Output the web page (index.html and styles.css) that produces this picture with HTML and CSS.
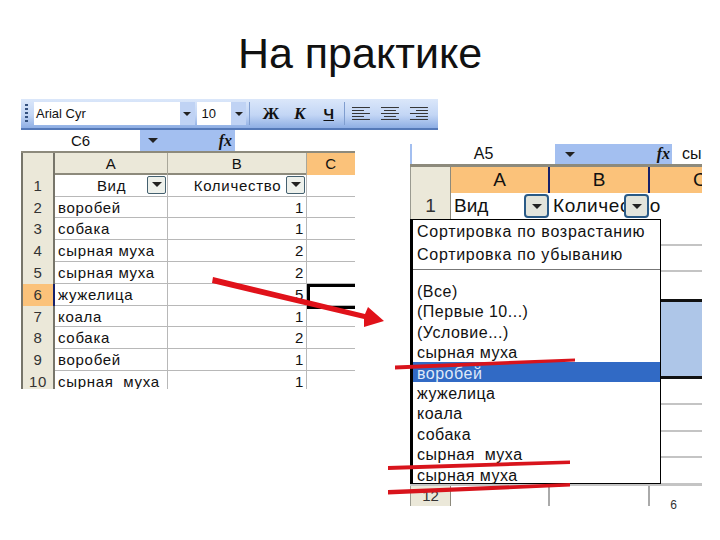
FILE: index.html
```html
<!DOCTYPE html>
<html lang="ru">
<head>
    <meta charset="UTF-8">
    <title>На практике</title>
    <link rel="stylesheet" href="styles.css">
</head>
<body>
    <div class="slide">
        <h1 class="title">На практике</h1>

        <div class="pictures">
            <div class="left-pic">
                <div class="toolbar">
                    <span class="grip"></span>
                    <span class="font-box">Arial Cyr</span>
                    <span class="tb-arrow"><i class="tri"></i></span>
                    <span class="size-box">10</span>
                    <span class="tb-arrow"><i class="tri"></i></span>
                    <span class="tb-sep"></span>
                    <b class="tb-btn">Ж</b>
                    <b class="tb-btn tb-italic">К</b>
                    <b class="tb-btn tb-under">Ч</b>
                    <span class="tb-sep"></span>
                    <svg class="align-icon" width="20" height="16" viewBox="0 0 20 16"><path d="M1 1.5H19M1 4.5H13M1 7.5H19M1 10.5H13M1 13.5H19" stroke="#333" fill="none"/></svg>
                    <svg class="align-icon" width="20" height="16" viewBox="0 0 20 16"><path d="M1 1.5H19M4 4.5H16M1 7.5H19M4 10.5H16M1 13.5H19" stroke="#333" fill="none"/></svg>
                    <svg class="align-icon" width="20" height="16" viewBox="0 0 20 16"><path d="M1 1.5H19M7 4.5H19M1 7.5H19M7 10.5H19M1 13.5H19" stroke="#333" fill="none"/></svg>
                </div>
                <div class="namebar">
                    <span class="name-cell">C6</span>
                    <span class="name-blue"><i class="tri"></i><em class="fx">fx</em></span>
                </div>
                <div class="sheet-a">
                    <div class="row-a row-head">
                        <span class="rh"></span><span class="ch">A</span><span class="ch">B</span><span class="ch ch-on">C</span>
                    </div>
                    <div class="row-a">
                        <span class="rh">1</span>
                        <span class="c hdr-cell">Вид<span class="filter"><i class="tri"></i></span></span>
                        <span class="c hdr-cell">Количество<span class="filter"><i class="tri"></i></span></span>
                        <span class="c"></span>
                    </div>
                    <div class="row-a"><span class="rh">2</span><span class="c">воробей</span><span class="c num">1</span><span class="c"></span></div>
                    <div class="row-a"><span class="rh">3</span><span class="c">собака</span><span class="c num">1</span><span class="c"></span></div>
                    <div class="row-a"><span class="rh">4</span><span class="c">сырная муха</span><span class="c num">2</span><span class="c"></span></div>
                    <div class="row-a"><span class="rh">5</span><span class="c">сырная муха</span><span class="c num">2</span><span class="c"></span></div>
                    <div class="row-a"><span class="rh rh-on">6</span><span class="c">жужелица</span><span class="c num">5</span><span class="c c-active"></span></div>
                    <div class="row-a"><span class="rh">7</span><span class="c">коала</span><span class="c num">1</span><span class="c"></span></div>
                    <div class="row-a"><span class="rh">8</span><span class="c">собака</span><span class="c num">2</span><span class="c"></span></div>
                    <div class="row-a"><span class="rh">9</span><span class="c">воробей</span><span class="c num">1</span><span class="c"></span></div>
                    <div class="row-a row-cut"><span class="rh">10</span><span class="c">сырная&nbsp; муха</span><span class="c num">1</span><span class="c"></span></div>
                </div>
            </div>

            <div class="right-pic">
                <div class="namebar-b">
                    <span class="name-cell-b">A5</span>
                    <span class="name-blue-b"><i class="tri"></i><em class="fx">fx</em></span>
                    <span class="name-text">сы</span>
                </div>
                <div class="sheet-b">
                    <div class="row-b row-head-b">
                        <span class="rh"></span><span class="ch-b">A</span><span class="ch-b">B</span><span class="ch-b ch-clip">C</span>
                    </div>
                    <div class="row-b row-one">
                        <span class="rh">1</span>
                        <span class="c-b">Вид<span class="filter filter-b"><i class="tri"></i></span></span>
                        <span class="c-b c-long">Количество<span class="filter filter-b"><i class="tri"></i></span></span>
                        <span class="c-b"></span>
                    </div>
                    <div class="under">
                        <div class="line"></div>
                        <div class="line"></div>
                        <div class="line line-last"></div>
                        <div class="sel-block"></div>
                        <div class="line"></div>
                        <div class="line"></div>
                        <div class="line"></div>
                        <div class="line"></div>
                        <div class="row-b row-end">
                            <span class="rh">12</span><span class="c-b"></span><span class="c-b"></span><span class="c-b"></span>
                        </div>
                    </div>
                    <div class="menu">
                        <div class="menu-sort">
                            <div>Сортировка по возрастанию</div>
                            <div>Сортировка по убыванию</div>
                        </div>
                        <div class="menu-list">
                            <div>(Все)</div>
                            <div>(Первые 10...)</div>
                            <div>(Условие...)</div>
                            <div>сырная муха</div>
                            <div class="picked">воробей</div>
                            <div>жужелица</div>
                            <div>коала</div>
                            <div>собака</div>
                            <div>сырная&nbsp; муха</div>
                            <div>сырная муха</div>
                        </div>
                    </div>
                </div>
                <div class="page-num">6</div>
            </div>
        </div>

        <svg class="marks" width="720" height="540" viewBox="0 0 720 540">
            <path d="M213 277 L365 314 L368 307 L384 321 L364 327 L364 319 L212 283 Z" fill="#e0121a"/>
            <path d="M395 365.5 L575 358.5 L575 361.5 L395 369.5 Z" fill="#d8141c"/>
            <path d="M388 466 L570 460.5 L570 464 L388 470 Z" fill="#d8141c"/>
            <path d="M388 490 L570 483 L570 486.5 L388 494.5 Z" fill="#d8141c"/>
        </svg>
    </div>
</body>
</html>
```

FILE: styles.css
```css
body {
    margin: 0;
    background-color: #fff;
    font-family: "Liberation Sans", Arial, sans-serif;
    color: #111;
}

.slide {
    position: relative;
    width: 720px;
    height: 540px;
    overflow: hidden;
}

.title {
    margin: 0;
    height: 99px;
    padding-top: 28px;
    box-sizing: border-box;
    text-align: center;
    font-size: 43px;
    font-weight: normal;
    line-height: 50px;
}

.pictures {
    display: flex;
    padding-left: 21px;
}

.left-pic {
    width: 389px;
    flex: none;
}

.tri {
    display: inline-block;
    width: 0;
    height: 0;
    border-left: 5px solid transparent;
    border-right: 5px solid transparent;
    border-top: 5px solid #222;
}

/* toolbar */
.toolbar {
    display: flex;
    align-items: center;
    width: 417px;
    height: 31px;
    box-sizing: border-box;
    padding-left: 4px;
    background: linear-gradient(#dbe7fa, #c3d6f5 55%, #8eaee4);
    border-bottom: 2px solid #5579b8;
}

.grip {
    width: 3px;
    height: 20px;
    margin-right: 6px;
    background: repeating-linear-gradient(#34517f 0 2px, transparent 2px 4px);
}

.font-box {
    width: 146px;
    height: 23px;
    line-height: 23px;
    padding-left: 2px;
    box-sizing: border-box;
    background-color: #fff;
    font-size: 13px;
}

.size-box {
    width: 35px;
    height: 23px;
    line-height: 23px;
    padding-left: 5px;
    box-sizing: border-box;
    background-color: #fff;
    font-size: 13px;
}

.tb-arrow {
    display: flex;
    align-items: center;
    justify-content: center;
    width: 15px;
    height: 23px;
    margin-right: 2px;
    background-color: #c0d3f4;
}

.tb-arrow .tri {
    border-left-width: 4px;
    border-right-width: 4px;
    border-top-width: 4px;
}

.tb-sep {
    width: 1px;
    height: 23px;
    margin: 0 6px 0 1px;
    background-color: #7f9dcf;
}

.tb-btn {
    width: 29px;
    text-align: center;
    font-family: "Liberation Serif", serif;
    font-size: 17px;
}

.tb-italic {
    font-style: italic;
}

.tb-under {
    text-decoration: underline;
    font-family: "Liberation Sans", sans-serif;
    font-size: 15px;
}

.align-icon {
    margin-right: 9px;
}

/* name bar */
.namebar {
    display: flex;
    height: 21px;
    font-size: 15px;
    line-height: 22px;
}

.name-cell {
    width: 119px;
    text-align: center;
}

.name-blue {
    display: flex;
    align-items: center;
    justify-content: space-between;
    width: 95px;
    box-sizing: border-box;
    padding: 0 3px 0 8px;
    background-color: #a3bff0;
}

.fx {
    font-family: "Liberation Serif", serif;
    font-weight: bold;
    font-size: 16px;
}

/* left sheet */
.sheet-a {
    width: 334px;
    height: 236px;
    overflow: hidden;
    border-top: 2px solid #8d8a7c;
}

.row-a {
    display: grid;
    grid-template-columns: 34px 113px 139px 48px;
    height: 21.8px;
    box-sizing: border-box;
    border-bottom: 1px solid #b8b8b8;
    font-size: 15px;
    line-height: 22px;
    letter-spacing: 0.7px;
}

.row-head {
    background-color: #ebe8d9;
    border-bottom: 2px solid #8d8a7c;
}

.rh {
    text-align: center;
    background-color: #ebe8d9;
    border-left: 2px solid #77756a;
    border-right: 2px solid #77756a;
    box-sizing: border-box;
    color: #333;
}

.rh-on {
    background-color: #fbc27a;
    border-right-color: #15206a;
}

.ch {
    text-align: center;
    border-right: 1px solid #a9a79a;
}

.ch-on {
    background-color: #fbc27a;
    border-right: 0;
}

.c {
    position: relative;
    padding: 0 2px 0 3px;
    border-right: 1px solid #b8b8b8;
    white-space: nowrap;
}

.c:last-child {
    border-right: 0;
}

.num {
    text-align: right;
}

.hdr-cell {
    text-align: center;
}

.c-active {
    border-top: 3px solid #000;
    border-bottom: 3px solid #000;
    border-left: 3px solid #000;
    margin-bottom: -3px;
}

.filter {
    position: absolute;
    top: 1px;
    right: 1px;
    display: flex;
    align-items: center;
    justify-content: center;
    width: 19px;
    height: 18px;
    box-sizing: border-box;
    border: 1px solid #44606f;
    border-radius: 2px;
    background-color: #eef1ec;
}

/* right picture */
.right-pic {
    width: 292px;
    flex: none;
    margin-top: 45px;
}

.namebar-b {
    display: flex;
    height: 20px;
    line-height: 20px;
    font-size: 16px;
    border-left: 2px solid #a3bff0;
}

.name-cell-b {
    width: 143px;
    text-align: center;
}

.name-blue-b {
    display: flex;
    align-items: center;
    justify-content: space-between;
    width: 117px;
    box-sizing: border-box;
    padding: 0 2px 0 10px;
    background-color: #a3bff0;
}

.name-text {
    padding-left: 10px;
}

.sheet-b {
    position: relative;
    height: 339px;
    overflow: hidden;
    border-top: 3px solid #8d8a7c;
}

.row-b {
    display: grid;
    grid-template-columns: 41px 99px 100px 52px;
    font-size: 19px;
    line-height: 26px;
}

.row-b .rh {
    border-left: 1px solid #9a9a90;
    border-right: 1px solid #8d8a7c;
}

.row-head-b {
    height: 26px;
    box-sizing: border-box;
    border-bottom: 2px solid #15206a;
}

.ch-b {
    text-align: center;
    background-color: #fbc27a;
    border-right: 2px solid #15206a;
}

.ch-clip {
    border-right: 0;
    text-align: left;
    padding-left: 43px;
}

.row-one {
    height: 26px;
}

.c-b {
    position: relative;
    padding-left: 3px;
    border-right: 1px solid transparent;
    white-space: nowrap;
}

.c-long {
    letter-spacing: 0.6px;
}

.filter-b {
    top: 1px;
    right: 0;
    width: 25px;
    height: 24px;
    border: 2px solid #2a5a86;
    border-radius: 4px;
    background-color: #e2e4dc;
}

.under {
    height: 284px;
}

.line {
    height: 26.5px;
    box-sizing: border-box;
    border-bottom: 2px solid #c4c4c4;
}

.line-last {
    border-bottom: 0;
}

.sel-block {
    height: 80px;
    box-sizing: border-box;
    background-color: #aec6e8;
    border-top: 3px solid #111;
    border-bottom: 3px solid #111;
}

.row-end {
    height: 20px;
    border-top: 1px solid #c4c4c4;
    font-size: 15px;
    line-height: 20px;
}

.row-end .c-b {
    border-right: 2px solid #aaa;
}

.row-end .c-b:last-child {
    border-right: 0;
}

.menu {
    position: absolute;
    left: 0;
    top: 52px;
    width: 251px;
    height: 265px;
    box-sizing: border-box;
    background-color: #fff;
    border: 1px solid #000;
    border-left: 3px solid #000;
    font-size: 16px;
    letter-spacing: 0.5px;
    white-space: nowrap;
}

.menu-sort {
    height: 50px;
    padding-left: 4px;
    border-bottom: 1px solid #777;
    box-sizing: border-box;
    line-height: 23px;
    letter-spacing: 0.72px;
}

.menu-list {
    padding-top: 10px;
}

.menu-list div {
    height: 20.4px;
    line-height: 24px;
    padding-left: 4px;
}

.menu-list .picked {
    background-color: #316ac5;
    color: #dfe8f8;
}

.page-num {
    margin-top: -8px;
    padding-right: 25px;
    text-align: right;
    font-size: 12px;
    color: #333;
}

/* red arrow and strike lines drawn over the pictures */
.marks {
    position: absolute;
    left: 0;
    top: 0;
}
```
